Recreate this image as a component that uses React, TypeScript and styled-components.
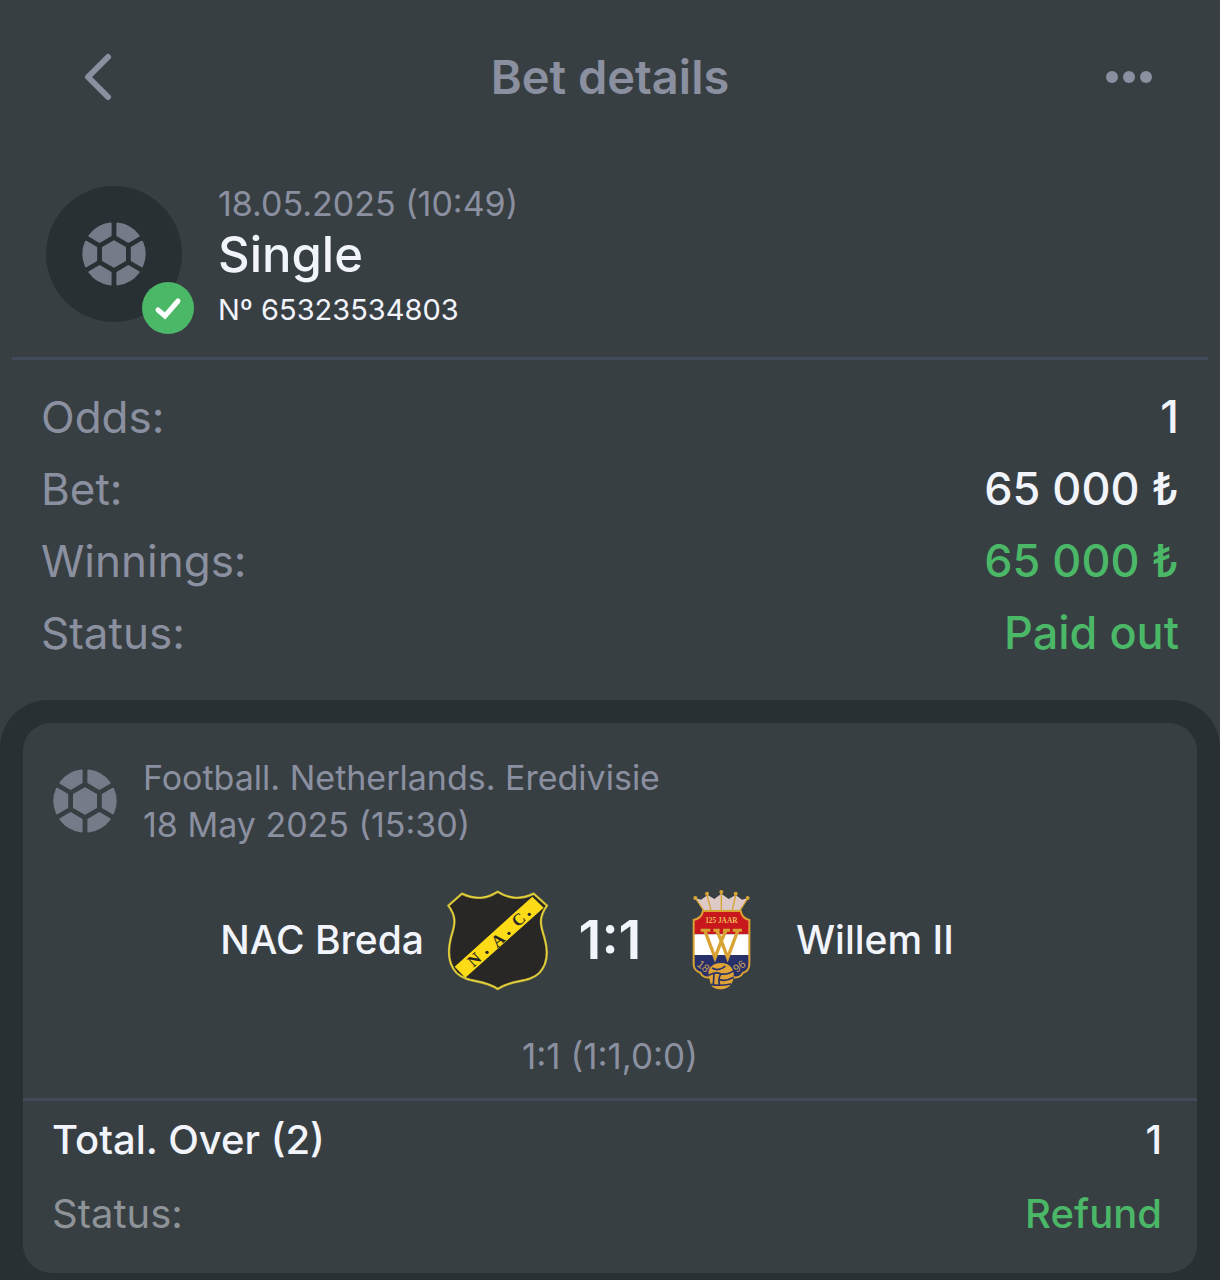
import React from "react";
import styled, { createGlobalStyle } from "styled-components";

const color = {
  page: "#383f43",
  well: "#293033",
  line: "#414a58",
  muted: "#8b90a0",
  neutral: "#8e9398",
  icon: "#757b88",
  text: "#f1f4fb",
  green: "#4bb868",
};

const GlobalStyle = createGlobalStyle`
  * { box-sizing: border-box; }
  body {
    margin: 0;
    background: ${color.page};
    color: ${color.text};
    font-family: Inter, "Liberation Sans", sans-serif;
  }
  h1, h2, p, dl, dd { margin: 0; font-weight: inherit; }
`;

const Page = styled.div`
  display: flex;
  flex-direction: column;
  min-height: 100vh;
`;

const Header = styled.header`
  display: grid;
  grid-template-columns: 64px 1fr 64px;
  align-items: center;
  padding: 45px 68px;
`;

const IconButton = styled.button<{ $end?: boolean }>`
  display: flex;
  align-items: center;
  justify-content: ${(p) => (p.$end ? "flex-end" : "flex-start")};
  height: 64px;
  padding: 0;
  border: 0;
  background: none;
  color: ${color.muted};
  cursor: pointer;
`;

const Title = styled.h1`
  font-size: 47px;
  line-height: 64px;
  font-weight: 600;
  color: ${color.muted};
  text-align: center;
`;

const Summary = styled.section`
  display: flex;
  align-items: flex-start;
  gap: 36px;
  margin: 0 12px;
  padding: 26px 34px 20px;
  border-bottom: 3px solid ${color.line};
`;

const Avatar = styled.div`
  position: relative;
  display: flex;
  align-items: center;
  justify-content: center;
  width: 136px;
  height: 136px;
  margin-top: 6px;
  border-radius: 50%;
  background: ${color.well};
`;

const Badge = styled.span`
  position: absolute;
  right: -12px;
  bottom: -12px;
  display: flex;
  width: 52px;
  height: 52px;
  border-radius: 50%;
  background: ${color.green};
`;

const Small = styled.p`
  font-size: 34px;
  line-height: 47px;
  color: ${color.muted};
`;

const BetKind = styled.h2`
  font-size: 49px;
  line-height: 56px;
  font-weight: 500;
`;

const BetNumber = styled.p`
  font-size: 29px;
  line-height: 54px;
`;

const Facts = styled.dl`
  display: flex;
  flex-direction: column;
  padding: 21px 41px 31px;
`;

const Fact = styled.div<{ $compact?: boolean }>`
  display: flex;
  justify-content: space-between;
  font-size: ${(p) => (p.$compact ? 40 : 45)}px;
  line-height: ${(p) => (p.$compact ? 74 : 72)}px;
`;

const Label = styled.dt<{ $tone?: "strong" | "neutral" }>`
  font-size: ${(p) => (p.$tone ? 40 : 44)}px;
  font-weight: ${(p) => (p.$tone === "strong" ? 500 : 400)};
  color: ${(p) =>
    p.$tone === "strong" ? color.text : p.$tone === "neutral" ? color.neutral : color.muted};
`;

const Value = styled.dd<{ $positive?: boolean }>`
  font-weight: 500;
  color: ${(p) => (p.$positive ? color.green : color.text)};
`;

const Events = styled.main`
  flex: 1;
  padding: 23px 23px 8px;
  border-radius: 48px 48px 0 0;
  background: ${color.well};
`;

const Card = styled.article`
  border-radius: 28px;
  background: ${color.page};
`;

const League = styled.header`
  display: flex;
  align-items: center;
  gap: 26px;
  padding: 31px 30px 0;
`;

const Match = styled.div`
  display: grid;
  grid-template-columns: 1fr 122px 1fr;
  align-items: center;
  padding: 41px 30px 0;
`;

const Team = styled.div<{ $away?: boolean }>`
  display: flex;
  flex-direction: ${(p) => (p.$away ? "row-reverse" : "row")};
  align-items: center;
  justify-content: flex-end;
  gap: 23px;
  font-size: 39px;
  line-height: 48px;
  font-weight: 500;
`;

const Crest = styled.span`
  display: flex;
  justify-content: center;
  width: 102px;
`;

const Score = styled.p`
  font-size: 54px;
  line-height: 64px;
  font-weight: 600;
  text-align: center;
`;

const Periods = styled.p`
  padding: 42px 0 18px;
  font-size: 35px;
  line-height: 47px;
  color: ${color.muted};
  text-align: center;
`;

const Outcome = styled.dl`
  padding: 2px 35px 22px 29px;
  border-top: 3px solid ${color.line};
`;

function Ball() {
  return (
    <svg width="64" height="64" viewBox="-32 -32 64 64" aria-hidden="true">
      <g fill={color.icon} stroke={color.icon} strokeWidth="2" strokeLinejoin="round">
        <path d="M0-12.7L11-6.35V6.35L0 12.7L-11 6.35V-6.35Z" />
        {[0, 60, 120, 180, 240, 300].map((a) => (
          <path
            key={a}
            transform={`rotate(${a})`}
            d="M17.8-6.35L28.04-12.26A30.6 30.6 0 0 1 28.04 12.26L17.8 6.35Z"
          />
        ))}
      </g>
    </svg>
  );
}

function NacCrest() {
  return (
    <svg width="102" height="102" viewBox="53 57 306 306" role="img" aria-label="NAC Breda">
      <path
        d="M57 107L98 71Q154 99 205 65Q257 99 313 71L353 107C326 144 334 168 345 202C358 246 354 283 330 309C296 341 251 326 205 357C160 326 116 341 82 309C56 282 54 246 65 202C75 168 85 144 57 107Z"
        fill="#282726"
        stroke="#b9ad3d"
        strokeWidth="7"
        strokeLinejoin="round"
      />
      <path
        d="M57 107L98 71Q154 99 205 65Q257 99 313 71L353 107C326 144 334 168 345 202C358 246 354 283 330 309C296 341 251 326 205 357C160 326 116 341 82 309C56 282 54 246 65 202C75 168 85 144 57 107Z"
        fill="none"
        stroke="#f4dc35"
        strokeWidth="3"
      />
      <path d="M309 80L343 113L108 323L76 290Z" fill="#fedb17" />
      <g fill="#282726" fontFamily="Liberation Serif, serif" fontWeight="700" fontSize="50" textAnchor="middle">
        <text transform="translate(146 281) rotate(-42)">N</text>
        <text transform="translate(217 223) rotate(-42)">A</text>
        <text transform="translate(279 161) rotate(-42)">C</text>
      </g>
      <g fill="#282726">
        <circle cx="173" cy="247" r="5" />
        <circle cx="239" cy="190" r="5" />
        <circle cx="300" cy="133" r="5" />
      </g>
    </svg>
  );
}

function WillemCrest() {
  const gold = "#d9a334";
  const shield =
    "M103 124H216Q220 146 242 151V286Q240 305 223 309Q215 326 195 323L158 337L124 323Q102 326 95 309Q77 304 75 286V151Q99 146 103 124Z";
  return (
    <svg width="60" height="102" viewBox="70 58 180 306" role="img" aria-label="Willem II">
      <defs>
        <clipPath id="willem-shield">
          <path d={shield} />
        </clipPath>
      </defs>
      <path d="M82 86L97 90L117 76L137 88L158 72L180 88L201 76L220 90L236 86L216 122H103Z" fill="#ddc9c5" />
      <path d="M82 88L105 122M115 76L127 122M158 70V122M201 76L191 122M236 88L214 122" stroke={gold} strokeWidth="4" fill="none" />
      <g fill={gold}>
        <circle cx="80" cy="85" r="6" />
        <circle cx="115" cy="72" r="6" />
        <circle cx="158" cy="67" r="6" />
        <circle cx="201" cy="72" r="6" />
        <circle cx="237" cy="85" r="6" />
      </g>
      <g clipPath="url(#willem-shield)">
        <path d="M70 120H248V194H70Z" fill="#c8171d" />
        <path d="M70 194H248V256H70Z" fill="#fff" />
        <path d="M70 256H248V340H70Z" fill="#28306a" />
      </g>
      <path d={shield} fill="none" stroke={gold} strokeWidth="6" />
      <text x="158" y="161" fill="#f0bd55" fontFamily="Liberation Serif, serif" fontWeight="700" fontSize="22" textAnchor="middle">
        125 JAAR
      </text>
      <path d="M109 184L139 264L158 214L177 264L207 184M145 184L158 214L171 184" fill="none" stroke={gold} strokeWidth="10" />
      <path d="M96 182H125M134 182H153M163 182H184M192 182H220" stroke={gold} strokeWidth="9" />
      <g fill="#c9a15a" fontFamily="Liberation Sans, sans-serif" fontSize="33" textAnchor="middle">
        <text transform="translate(97 299) rotate(38)">18</text>
        <text transform="translate(219 299) rotate(-38)">96</text>
      </g>
      <path d="M120 317C115 293 137 279 158 280C182 280 198 298 195 320C193 345 179 358 157 359C141 359 130 354 126 344Z" fill="#e0a436" />
      <path
        d="M130 295Q150 307 170 289M120 317Q141 305 156 313Q147 331 153 346M156 313Q178 316 196 303M153 330Q173 336 195 323M126 344Q151 350 187 343M136 311L134 346"
        fill="none"
        stroke="#28306a"
        strokeWidth="5"
      />
    </svg>
  );
}

export default function App() {
  return (
    <>
      <GlobalStyle />
      <Page>
        <Header>
          <IconButton type="button" aria-label="Back">
            <svg width="60" height="48" viewBox="0 0 60 48" fill="none" aria-hidden="true">
              <path d="M40 4L20 24L40 44" stroke="currentColor" strokeWidth="6" strokeLinecap="round" strokeLinejoin="round" />
            </svg>
          </IconButton>
          <Title>Bet details</Title>
          <IconButton type="button" aria-label="More" $end>
            <svg width="46" height="12" viewBox="0 0 46 12" fill="currentColor" aria-hidden="true">
              <circle cx="6" cy="6" r="6" />
              <circle cx="23" cy="6" r="6" />
              <circle cx="40" cy="6" r="6" />
            </svg>
          </IconButton>
        </Header>

        <Summary>
          <Avatar>
            <Ball />
            <Badge>
              <svg width="52" height="52" viewBox="0 0 52 52" fill="none" aria-hidden="true">
                <path d="M16 28L23 34L36 19" stroke="#fff" strokeWidth="5" strokeLinecap="round" />
              </svg>
            </Badge>
          </Avatar>
          <div>
            <Small>18.05.2025 (10:49)</Small>
            <BetKind>Single</BetKind>
            <BetNumber>Nº 65323534803</BetNumber>
          </div>
        </Summary>

        <Facts>
          <Fact>
            <Label>Odds:</Label>
            <Value>1</Value>
          </Fact>
          <Fact>
            <Label>Bet:</Label>
            <Value>65 000 ₺</Value>
          </Fact>
          <Fact>
            <Label>Winnings:</Label>
            <Value $positive>65 000 ₺</Value>
          </Fact>
          <Fact>
            <Label>Status:</Label>
            <Value $positive>Paid out</Value>
          </Fact>
        </Facts>

        <Events>
          <Card>
            <League>
              <Ball />
              <div>
                <Small>Football. Netherlands. Eredivisie</Small>
                <Small>18 May 2025 (15:30)</Small>
              </div>
            </League>
            <Match>
              <Team>
                NAC Breda
                <Crest>
                  <NacCrest />
                </Crest>
              </Team>
              <Score>1:1</Score>
              <Team $away>
                Willem II
                <Crest>
                  <WillemCrest />
                </Crest>
              </Team>
            </Match>
            <Periods>1:1 (1:1,0:0)</Periods>
            <Outcome>
              <Fact $compact>
                <Label $tone="strong">Total. Over (2)</Label>
                <Value>1</Value>
              </Fact>
              <Fact $compact>
                <Label $tone="neutral">Status:</Label>
                <Value $positive>Refund</Value>
              </Fact>
            </Outcome>
          </Card>
        </Events>
      </Page>
    </>
  );
}
